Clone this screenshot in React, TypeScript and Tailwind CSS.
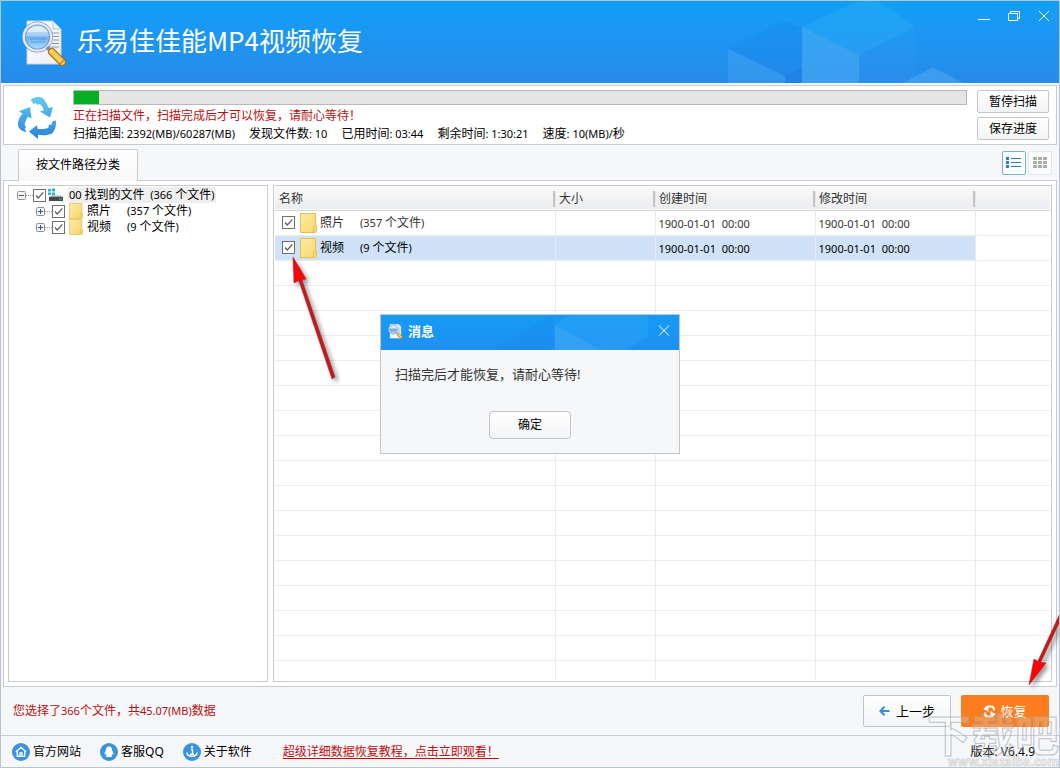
import { useState } from 'react';
import type { ReactNode } from 'react';

const columns = ['名称', '大小', '创建时间', '修改时间', ''];

const folders = [
  { name: '照片', count: '(357', created: '1900-01-01  00:00', modified: '1900-01-01  00:00' },
  { name: '视频', count: '(9', created: '1900-01-01  00:00', modified: '1900-01-01  00:00' },
];

const emptyRows = Array.from({ length: 16 }, (_, i) => i);

// Latin text and digits run one size smaller than the Chinese text
function Num({ children }: { children: ReactNode }) {
  return <span className="text-[11px] whitespace-pre">{children}</span>;
}

function Check({ label }: { label: string }) {
  return (
    <label className="grid w-[13px] h-[13px] shrink-0">
      <input
        type="checkbox"
        defaultChecked
        aria-label={label}
        className="peer [grid-area:1/1] appearance-none w-[13px] h-[13px] border border-[#707070] bg-white"
      />
      <svg
        viewBox="0 0 13 13"
        className="[grid-area:1/1] w-[13px] h-[13px] pointer-events-none opacity-0 peer-checked:opacity-100"
      >
        <path d="M3 6.5 L5.3 9 L10.3 3.3" fill="none" stroke="#5c5c5c" strokeWidth="1.2" />
      </svg>
    </label>
  );
}

function Folder({ className }: { className: string }) {
  return (
    <svg viewBox="0 0 17 20" preserveAspectRatio="none" className={className}>
      <defs>
        <linearGradient id="folder" x1="0" y1="0" x2="1" y2="1">
          <stop offset="0" stopColor="#fdeba5" />
          <stop offset="1" stopColor="#f7d76c" />
        </linearGradient>
      </defs>
      <path d="M0.5 0.5 H15.5 V12 L16.5 13 V18.5 L15.5 19.5 H0.5 Z" fill="url(#folder)" stroke="#e3c050" />
      <path d="M13.5 19 V13.5 L15.5 12" fill="none" stroke="#e3c050" />
    </svg>
  );
}

function AppLogo({ className }: { className: string }) {
  return (
    <svg viewBox="0 0 46 48" className={className}>
      <defs>
        <linearGradient id="paper" x1="0" y1="0" x2="1" y2="1">
          <stop offset="0" stopColor="#ffffff" />
          <stop offset="1" stopColor="#e9eef8" />
        </linearGradient>
        <linearGradient id="lens" x1="0" y1="0" x2="0" y2="1">
          <stop offset="0" stopColor="#d8ecfc" />
          <stop offset="0.45" stopColor="#a5cdf4" />
          <stop offset="0.5" stopColor="#6fb0ee" />
          <stop offset="1" stopColor="#a9e4fb" />
        </linearGradient>
        <linearGradient id="handle" x1="0" y1="1" x2="1" y2="0">
          <stop offset="0" stopColor="#c98212" />
          <stop offset="0.5" stopColor="#ffd766" />
          <stop offset="1" stopColor="#d48f1c" />
        </linearGradient>
      </defs>
      <path d="M6 3 H32 L40 11 V46 H6 Z" fill="url(#paper)" stroke="#c5d0e2" />
      <path d="M32 3 V11 H40 Z" fill="#eef2f9" stroke="#b5c2d8" />
      <path d="M31 15 H38 M32 18.5 H38 M32 22 H38 M31 25.5 H38 M30 29 H38" stroke="#8f9aad" strokeWidth="1.2" />
      <circle cx="16.5" cy="19" r="13.5" fill="url(#lens)" stroke="#7f98bd" strokeWidth="4" />
      <circle cx="16.5" cy="19" r="13.7" fill="none" stroke="#e4ecf7" strokeWidth="2.2" />
      <path d="M6 14 C9 7 24 7 27 14 Z" fill="#ffffff" opacity="0.5" />
      <path d="M9 21 H25 M10 24 H24" stroke="#4f97e3" strokeWidth="1.5" opacity="0.5" />
      <path d="M26 29 L30 33" stroke="#8092ae" strokeWidth="4" />
      <path d="M31 34 L41 44" stroke="#a96c0c" strokeWidth="8" strokeLinecap="round" />
      <path d="M31 34 L41 44" stroke="url(#handle)" strokeWidth="6" strokeLinecap="round" />
      <path d="M39 46 L43 42" stroke="#c58422" strokeWidth="1.5" />
    </svg>
  );
}

function RecycleLogo() {
  return (
    <svg viewBox="0 0 40 42" className="w-10 h-[42px] shrink-0">
      <defs>
        <linearGradient id="cycle" gradientUnits="userSpaceOnUse" x1="0" y1="0" x2="0" y2="42">
          <stop offset="0" stopColor="#5fcdf2" />
          <stop offset="1" stopColor="#2a82d8" />
        </linearGradient>
      </defs>
      <g fill="url(#cycle)">
        <path d="M13.5 3.5 C16 0 22 -1 25.5 1 C28 3 30 7 31.5 11 L36 10 L33 20.5 L23 14.5 L27 13.3 C26 10.5 24.5 8 22.5 6.8 L20.5 8 L18.5 6 L16 7 L15.5 5 Z" />
        <path d="M13 10 L2 14.3 L5.5 16.5 C2.5 20 0.5 24 1 28 C1.5 32 5 34.5 9.5 35 L7.8 32 L9 30 L7.5 28 C8 25 9.5 22 11 19.7 L14.5 21.5 Z" />
        <path d="M12 34.5 L20 28 L20.5 31.8 C25 32.3 29 32 31.5 30.5 L32 27.5 L34.5 28 L35 25 L38.7 23.3 C39.5 28 38.5 33 35 36.5 C31 38.5 26 38.5 21 37.8 L21 42 Z" />
      </g>
    </svg>
  );
}

function Expander({ open }: { open: boolean }) {
  return (
    <svg viewBox="0 0 9 9" className="w-[9px] h-[9px] shrink-0">
      <rect x="0.5" y="0.5" width="8" height="8" rx="1" fill="#f4f4f4" stroke="#919191" />
      <path d={open ? 'M2 4.5 H7' : 'M2 4.5 H7 M4.5 2 V7'} stroke="#3b4fa0" />
    </svg>
  );
}

function DriveIcon() {
  return (
    <svg viewBox="0 0 15 14" className="w-[15px] h-[14px] shrink-0">
      <path d="M0 1 H3 V3.5 H0 Z M4 0.5 H7 V3.5 H4 Z M0 4.5 H3 V7 H0 Z M4 4.5 H7 V7.5 H4 Z" fill="#29b5d8" />
      <path d="M3 7.5 H13 L15 9.5 H1 Z" fill="#a5a9ac" />
      <rect x="1" y="9" width="14" height="4" fill="#3f4a4c" />
      <rect x="11" y="10.5" width="3" height="1" fill="#39e05d" />
    </svg>
  );
}

function Cubes({ className }: { className: string }) {
  return (
    <svg viewBox="0 0 240 83" preserveAspectRatio="none" className={className}>
      <path d="M0 48 L57 20 L74 28 V69 L57 77 Z" fill="#1278e8" opacity="0.16" />
      <path d="M0 48 L57 76 V83 H0 Z" fill="#5ab4f8" opacity="0.28" />
      <path d="M57 76 L74 68 V83 H57 Z" fill="#1070e0" opacity="0.28" />
      <path d="M74 26 L131 0 H150 L188 26 L131 55 Z" fill="#31b4f8" opacity="0.32" />
      <path d="M74 26 L131 55 V83 H74 Z" fill="#5cb8f8" opacity="0.4" />
      <path d="M131 55 L188 26 V83 H131 Z" fill="#3ba4f5" opacity="0.15" />
      <path d="M175 83 L205 67 L235 83 Z" fill="#62b4f6" opacity="0.4" />
    </svg>
  );
}

function Arrow({ className, viewBox, shaft, head }: { className: string; viewBox: string; shaft: string; head: string }) {
  return (
    <svg viewBox={viewBox} aria-hidden="true" className={className}>
      <path d={shaft} fill="#c81818" stroke="#8f2626" strokeWidth="0.5" />
      <path d={head} fill="#f80505" stroke="#b81414" strokeWidth="0.5" />
    </svg>
  );
}

function BadgeIcon({ children }: { children: ReactNode }) {
  return (
    <svg viewBox="0 0 18 18" className="w-[18px] h-[18px] shrink-0">
      <circle cx="9" cy="9" r="9" fill="#3a93dc" />
      {children}
    </svg>
  );
}

const plainButton = 'border border-[#c3c5ca] bg-linear-to-b from-white to-[#f3f4f6] text-black';

export default function App() {
  const [dialogOpen, setDialogOpen] = useState(true);
  const [selected, setSelected] = useState(1);
  const progress = 2.8;

  return (
    <div className="relative flex flex-col min-h-screen overflow-hidden border border-[#b9c4d2] bg-[#f5f7f9] text-xs leading-4 text-black font-['Noto_Sans','Noto_Sans_CJK_SC',sans-serif]">
      {/* Title bar */}
      <header className="relative flex justify-between h-[82px] bg-linear-to-b from-[#0f9ff7] to-[#268be9]">
        <Cubes className="absolute right-[91px] top-0 w-[240px] h-[82px]" />
        <div className="flex items-center gap-[10px] pl-5">
          <AppLogo className="w-[46px] h-12" />
          <h1 className="pb-1 text-[26px] leading-8 font-normal text-white font-['Noto_Sans_CJK_SC',sans-serif]">
            乐易佳佳能MP4视频恢复
          </h1>
        </div>
        <div className="relative flex items-start gap-[18px] pt-2 pr-[9px] text-white">
          <button aria-label="最小化" className="w-3 h-4">
            <svg viewBox="0 0 12 16" fill="none" stroke="currentColor">
              <path d="M0 10.5 H12" />
            </svg>
          </button>
          <button aria-label="还原" className="w-3 h-4">
            <svg viewBox="0 0 12 16" fill="none" stroke="currentColor">
              <path d="M0.5 4.5 H9.5 V11.5 H0.5 Z M2.5 4 V2.5 H11.5 V9.5 H10" />
            </svg>
          </button>
          <button aria-label="关闭" className="w-3 h-4">
            <svg viewBox="0 0 12 16" fill="none" stroke="currentColor">
              <path d="M1 2 L11 12 M11 2 L1 12" />
            </svg>
          </button>
        </div>
      </header>

      {/* Scan progress */}
      <section className="flex items-center mx-0.5 mt-0.5 h-[60px] pl-[13px] pr-[7px] border border-[#c9cbd0] bg-white">
        <div className="pt-[6px]">
          <RecycleLogo />
        </div>
        <div className="flex-1 pt-px ml-4">
          <div
            role="progressbar"
            aria-valuenow={progress}
            className="h-[15px] border border-[#b6bab4] bg-[#e5e5e5]"
          >
            <div className="h-full bg-[#07ae22]" style={{ width: `${progress}%` }} />
          </div>
          <p className="mt-[3px] text-[#b80f0f]">正在扫描文件，扫描完成后才可以恢复，请耐心等待！</p>
          <div className="flex gap-[14px] mt-0.5">
            <span>扫描范围<Num>: 2392(MB)/60287(MB)</Num></span>
            <span>发现文件数<Num>: 10</Num></span>
            <span>已用时间<Num>: 03:44</Num></span>
            <span>剩余时间<Num>: 1:30:21</Num></span>
            <span>速度<Num>: 10(MB)/</Num>秒</span>
          </div>
        </div>
        <div className="flex flex-col gap-1 ml-[10px]">
          <button className={`w-[72px] h-[23px] rounded-xs ${plainButton}`}>暂停扫描</button>
          <button className={`w-[72px] h-[23px] rounded-xs ${plainButton}`}>保存进度</button>
        </div>
      </section>

      {/* Tab and view switch */}
      <div className="flex items-end justify-between h-[35px] pl-[17px] pr-[7px]">
        <button className="relative top-px w-[120px] h-8 pb-0.5 rounded-t-xs border border-b-0 border-[#c9cbd0] bg-linear-to-b from-white to-[#f8f8f9]">
          按文件路径分类
        </button>
        <div className="flex gap-0.5 mb-[5px]">
          <button
            aria-label="列表"
            className="flex items-center justify-center w-6 h-6 rounded-xs border border-[#73b3dc] bg-white"
          >
            <svg viewBox="0 0 16 12" className="w-4 h-3">
              <path d="M0 0 H3 V3 H0 Z M0 4 H3 V7 H0 Z M0 8 H3 V11 H0 Z" fill="#2f7fb2" />
              <path d="M5 1.5 H15 M5 5.5 H15 M5 9.5 H15" stroke="#2f7fb2" />
            </svg>
          </button>
          <button
            aria-label="图标"
            className="flex items-center justify-center w-6 h-6 rounded-xs border border-[#e3e5e8] bg-[#fafbfc]"
          >
            <svg viewBox="0 0 14 12" className="w-[14px] h-3">
              <path
                d="M0 0 H4 V3 H0 Z M5 0 H9 V3 H5 Z M10 0 H14 V3 H10 Z M0 4 H4 V7 H0 Z M5 4 H9 V7 H5 Z M10 4 H14 V7 H10 Z M0 8 H4 V11 H0 Z M5 8 H9 V11 H5 Z M10 8 H14 V11 H10 Z"
                fill="#adadad"
              />
            </svg>
          </button>
        </div>
      </div>

      {/* Tree and file list */}
      <main className="flex flex-1 gap-[5px] mx-0.5 p-1 border border-[#c9cbd0] bg-white">
        <aside className="w-[260px] shrink-0 pt-px pl-2 border border-[#c9cbd0]">
          <div className="flex items-center h-4">
            <Expander open />
            <span className="w-[7px] border-t border-dotted border-[#909090]" />
            <Check label="找到的文件" />
            <span className="ml-0.5 mr-[5px]">
              <DriveIcon />
            </span>
            <span className="px-px bg-[#efefef] whitespace-nowrap">
              <Num>00 </Num>找到的文件<Num>  (366 </Num>个文件<Num>)</Num>
            </span>
          </div>
          {folders.map((f) => (
            <div key={f.name} className="flex items-center h-4 pl-[19px]">
              <Expander open={false} />
              <span className="w-[7px] border-t border-dotted border-[#909090]" />
              <Check label={f.name} />
              <Folder className="w-[14px] h-4 ml-1" />
              <span className="w-10 ml-1">{f.name}</span>
              <span>
                <Num>{f.count} </Num>个文件<Num>)</Num>
              </span>
            </div>
          ))}
        </aside>

        <div className="flex-1 px-px border border-[#c9cbd0] overflow-hidden">
          <table className="w-full table-fixed border-collapse text-left">
            <colgroup>
              <col className="w-[280px]" />
              <col className="w-[100px]" />
              <col className="w-[160px]" />
              <col className="w-[160px]" />
              <col />
            </colgroup>
            <thead>
              <tr className="h-6 bg-linear-to-b from-[#fbfbfb] to-[#ebecee] border-b border-[#d3d4d7]">
                {columns.map((c, i) => (
                  <th key={i} className="p-0 font-normal text-[#333]">
                    <div className={i === 0 ? 'flex items-center pt-0.5 pl-1' : 'flex items-center gap-[3px] pt-0.5'}>
                      {i > 0 && <span className="w-[3px] h-4 -ml-0.5 bg-[#c2c4c7] border-r border-[#e8e8e8]" />}
                      {c}
                    </div>
                  </th>
                ))}
              </tr>
            </thead>
            <tbody>
              {folders.map((f, i) => (
                <tr
                  key={f.name}
                  onClick={() => setSelected(i)}
                  className={
                    selected === i
                      ? 'h-[25px] border-b border-[#ececec] text-black [&>td:not(:last-child)]:bg-[#cfe2f7]'
                      : 'h-[25px] border-b border-[#ececec] text-[#333]'
                  }
                >
                  <td className="p-0 border-r border-[#e9ebee]">
                    <div className="flex items-center pl-[7px]">
                      <Check label={f.name} />
                      <Folder className="w-[17px] h-5 ml-[5px]" />
                      <span className="w-10 pt-px ml-[3px]">{f.name}</span>
                      <span className="pt-px">
                        <Num>{f.count} </Num>个文件<Num>)</Num>
                      </span>
                    </div>
                  </td>
                  <td className="p-0 border-r border-[#e9ebee]" />
                  <td className="p-0 pt-0.5 pl-[3px] border-r border-[#e9ebee]"><Num>{f.created}</Num></td>
                  <td className="p-0 pt-0.5 pl-[3px] border-r border-[#e9ebee]"><Num>{f.modified}</Num></td>
                  <td className="p-0" />
                </tr>
              ))}
              {emptyRows.map((r) => (
                <tr key={r} className="h-[25px] border-b border-[#ececec]">
                  {columns.map((_, i) => (
                    <td key={i} className="p-0 border-r border-[#ececec] last:border-r-0" />
                  ))}
                </tr>
              ))}
              <tr className="h-5">
                {columns.map((_, i) => (
                  <td key={i} className="p-0 border-r border-[#ececec] last:border-r-0" />
                ))}
              </tr>
            </tbody>
          </table>
        </div>
      </main>

      {/* Actions */}
      <div className="flex items-center justify-between h-12 pl-3 pr-[10px]">
        <p className="text-[#b80f0f]">
          您选择了<Num>366</Num>个文件，共<Num>45.07(MB)</Num>数据
        </p>
        <div className="flex gap-[10px] text-[13px]">
          <button className={`flex items-center justify-center gap-1.5 w-[88px] h-8 rounded-xs ${plainButton}`}>
            <svg viewBox="0 0 11 10" className="w-[11px] h-[10px]" fill="none" stroke="#2f8fe0" strokeWidth="2">
              <path d="M10.5 5 H2 M5.5 0.8 L1.3 5 L5.5 9.2" />
            </svg>
            上一步
          </button>
          <button className="flex items-center justify-center gap-1 w-[88px] h-8 rounded-xs bg-[#fb7d1e] text-white">
            <svg viewBox="0 0 13 13" className="w-[13px] h-[13px]" fill="none" stroke="#fff" strokeWidth="2">
              <path d="M11 5.5 V4 Q10.5 1.5 8 1.5 H6 M2 7.5 V9 Q2.5 11.5 5 11.5 H7 M2.2 5 Q2.5 1.5 6 1.5 M10.8 8 Q10.5 11.5 7 11.5" />
              <path d="M0 3 H5.5 V7 Z M13 10 H7.5 V6 Z" fill="#fff" stroke="none" />
            </svg>
            恢复
          </button>
        </div>
      </div>

      {/* Status bar */}
      <footer className="flex items-center h-8 pl-[11px] pr-6 border-t border-[#c9cbd0]">
        <nav className="flex items-center gap-[19px]">
          <a href="#site" className="flex items-center gap-[3px]">
            <BadgeIcon>
              <path d="M3.8 9 L9 4.3 L14.2 9 M5.3 8.5 V13.3 H12.7 V8.5 M8 13 V10 H10 V13" fill="none" stroke="#fff" strokeWidth="1.3" />
            </BadgeIcon>
            官方网站
          </a>
          <a href="#qq" className="flex items-center gap-[3px]">
            <BadgeIcon>
              <path d="M9 3.5 C6.5 3.5 5.8 5.2 5.9 7.5 C4.8 9 4.3 10.5 4.6 11.7 L5.8 11 L6.5 12.4 L5.8 14 H12.2 L11.5 12.4 L12.2 11 L13.4 11.7 C13.7 10.5 13.2 9 12.1 7.5 C12.2 5.2 11.5 3.5 9 3.5 Z" fill="#fff" />
            </BadgeIcon>
            客服QQ
          </a>
          <a href="#about" className="flex items-center gap-[3px]">
            <BadgeIcon>
              <path d="M8 6.5 H9.5 V11 M4 9.5 C4 14.5 14 14.5 14 9.5 M7 11.2 H11" fill="none" stroke="#fff" strokeWidth="1.4" />
              <circle cx="9" cy="4" r="1.2" fill="#fff" />
            </BadgeIcon>
            关于软件
          </a>
        </nav>
        <a href="#guide" className="ml-[31px] text-[#c00d0d] underline underline-offset-2">
          超级详细数据恢复教程，点击立即观看！
        </a>
        <span className="ml-auto">版本: V6.4.9</span>
      </footer>

      {/* Pointer arrows */}
      <Arrow
        className="absolute left-[291px] top-[255px] w-[46px] h-[124px] overflow-visible pointer-events-none drop-shadow-[3px_3px_2px_rgba(0,0,0,0.4)]"
        viewBox="0 0 46 124"
        shaft="M6 22 L40 123 L43 121 L9 21 Z"
        head="M1 1 L2 27 L8 24 L14 23 Z"
      />
      <Arrow
        className="absolute right-0 bottom-[81px] w-8 h-[73px] overflow-visible pointer-events-none drop-shadow-[3px_3px_2px_rgba(0,0,0,0.4)]"
        viewBox="0 0 32 73"
        shaft="M10 50 L34 -2 V6 L13 51 Z"
        head="M2 72 L7 46 L12 49 L19 50 Z"
      />

      {/* Site mark */}
      <div
        aria-hidden="true"
        className="absolute right-0 bottom-0 flex flex-col items-end pointer-events-none text-[#ffffff30] font-bold font-['Noto_Sans_CJK_SC',sans-serif]"
      >
        <span className="text-[44px] leading-[44px] [-webkit-text-stroke:1px_#a4a6aaaa]">下载吧</span>
        <span className="text-xs leading-3 [-webkit-text-stroke:1px_#a9abae66]">www.xiazaiba.com</span>
      </div>

      {/* Message */}
      {dialogOpen && (
        <div className="fixed inset-0 flex items-center justify-center">
          <div role="dialog" aria-label="消息" className="w-[300px] border border-[#c3c6cb] bg-[#f5f7f9]">
            <div className="relative flex items-center h-[35px] pb-[3px] pl-[7px] pr-[9px] bg-linear-to-b from-[#149bf5] to-[#1e90f0] text-white">
              <svg viewBox="0 0 184 35" className="absolute right-0 top-0 w-[184px] h-[35px]">
                <path d="M0 33 L58 0 V35 H0 Z" fill="#1278e8" opacity="0.15" />
                <path d="M60 10 L76 0 H153 V22 L130 35 H105 Z" fill="#38aef8" opacity="0.3" />
                <path d="M60 10 L105 35 H60 Z" fill="#4cb2f8" opacity="0.5" />
              </svg>
              <AppLogo className="relative w-[15px] h-4" />
              <h2 className="relative flex-1 ml-[5px] text-[13px] font-bold">消息</h2>
              <button aria-label="关闭" onClick={() => setDialogOpen(false)} className="relative w-3 h-3">
                <svg viewBox="0 0 12 12" fill="none" stroke="currentColor">
                  <path d="M1 0.5 L11 10.5 M11 0.5 L1 10.5" />
                </svg>
              </button>
            </div>
            <p className="mt-4 ml-[14px] text-[13px] text-[#333]">扫描完后才能恢复，请耐心等待!</p>
            <div className="flex justify-center mt-[29px] mb-[14px]">
              <button onClick={() => setDialogOpen(false)} className={`w-[82px] h-7 rounded-sm ${plainButton}`}>
                确定
              </button>
            </div>
          </div>
        </div>
      )}
    </div>
  );
}
